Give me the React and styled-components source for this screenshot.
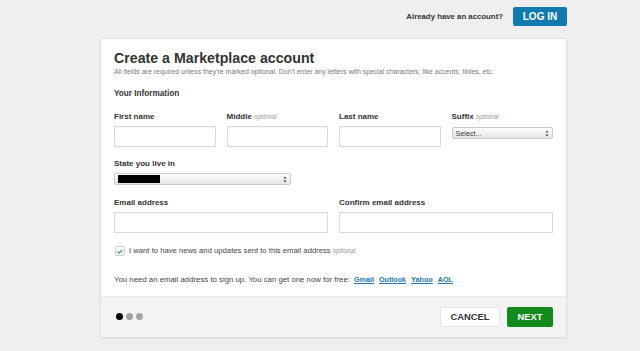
import React from "react";
import styled, { createGlobalStyle } from "styled-components";

const Global = createGlobalStyle`
  html, body { margin: 0; padding: 0; background: #efefef; }
  body { font-family: "Liberation Sans", Arial, sans-serif; color: #333; }
  * { box-sizing: border-box; }
`;

const Page = styled.div`
  width: 640px;
  height: 351px;
  overflow: hidden;
  background: #efefef;
`;

const TopBar = styled.div`
  height: 38px;
  display: flex;
  align-items: flex-start;
  justify-content: flex-end;
  padding: 7px 73px 0 0;
  gap: 10px;
`;

const Already = styled.span`
  font-size: 7.8px;
  font-weight: bold;
  color: #333;
  line-height: 19px;
`;

const LoginButton = styled.button`
  width: 54px;
  height: 19px;
  border: none;
  border-radius: 2px;
  background: #117bb0;
  color: #fff;
  font-family: inherit;
  font-weight: bold;
  font-size: 10px;
  padding: 0;
  line-height: 19px;
`;

const Card = styled.div`
  margin-left: 100px;
  width: 467px;
  background: #fff;
  border: 1px solid #e2e2e2;
  box-shadow: 0 1px 2px rgba(0, 0, 0, 0.06);
`;

const Body = styled.div`
  padding: 11px 13px 11px;
`;

const Title = styled.h1`
  margin: 0;
  font-size: 14.2px;
  line-height: 16px;
  font-weight: bold;
  color: #333;
`;

const Sub = styled.p`
  margin: 2px 0 0;
  font-size: 6.95px;
  line-height: 8px;
  color: #777;
`;

const Section = styled.h2`
  margin: 12px 0 0;
  font-size: 8.2px;
  line-height: 11px;
  font-weight: bold;
  color: #333;
`;

const Grid = styled.div`
  display: grid;
  grid-template-columns: repeat(${(p) => p.$cols}, 1fr);
  column-gap: 11px;
  margin-top: ${(p) => p.$top}px;
  width: ${(p) => p.$width || 439}px;
`;

const Field = styled.div`
  display: flex;
  flex-direction: column;
  gap: 4px;
`;

const Label = styled.label`
  font-size: 8px;
  line-height: 10px;
  font-weight: bold;
  color: #333;
`;

const Optional = styled.em`
  font-weight: normal;
  font-size: 6.5px;
  color: #999;
  margin-left: 2px;
`;

const Input = styled.div`
  height: 21px;
  border: 1px solid #d9d9d9;
  background: #fff;
  box-shadow: inset 0 1px 1px rgba(0, 0, 0, 0.04);
`;

const Select = styled.div`
  height: 12px;
  margin-top: ${(p) => p.$shift || 0}px;
  border: 1px solid #cbcbcb;
  border-radius: 2px;
  background: linear-gradient(#fdfdfd, #e6e6e6);
  display: flex;
  align-items: center;
  justify-content: space-between;
  padding: 0 3px 0 3px;
  font-size: 7.2px;
  color: #333;
  width: ${(p) => (p.$width ? p.$width + "px" : "auto")};
`;

const Redacted = styled.span`
  width: 42px;
  height: 8px;
  background: #000;
`;

const Arrows = () => (
  <svg width="4" height="7" viewBox="0 0 4 7">
    <path d="M2 0.5 L3.6 2.6 H0.4 Z M2 6.5 L3.6 4.4 H0.4 Z" fill="#444" />
  </svg>
);

const CheckRow = styled.div`
  margin-top: 13px;
  display: flex;
  align-items: center;
  gap: 4px;
  font-size: 7.7px;
  color: #444;
  line-height: 10px;
`;

const CheckBox = styled.span`
  width: 10px;
  height: 10px;
  margin-left: 1px;
  border: 1px solid #cfcfcf;
  border-radius: 2px;
  background: linear-gradient(#fff, #eee);
  display: flex;
  align-items: center;
  justify-content: center;
`;

const Providers = styled.p`
  margin: 19px 0 0;
  font-size: 7.8px;
  line-height: 10px;
  color: #444;
  display: flex;
  align-items: center;
`;

const ProviderLink = styled.a`
  font-weight: bold;
  color: #2477a8;
  text-decoration: underline;
  font-size: 7.2px;
  margin-left: ${(p) => (p.$first ? 4 : 5)}px;
`;

const Footer = styled.div`
  height: 41px;
  background: #f3f3f3;
  border-top: 1px solid #e6e6e6;
  display: flex;
  align-items: center;
  justify-content: space-between;
  padding: 0 13px 1px 15px;
`;

const Dots = styled.div`
  display: flex;
  gap: 3px;
`;

const Dot = styled.span`
  width: 7px;
  height: 7px;
  border-radius: 50%;
  background: ${(p) => (p.$active ? "#000" : "#a3a3a3")};
`;

const Actions = styled.div`
  display: flex;
  gap: 7px;
`;

const FooterButton = styled.button`
  height: 20px;
  width: ${(p) => p.$w}px;
  padding: 0;
  border: ${(p) => (p.$primary ? "none" : "1px solid #e4e4e4")};
  border-radius: 2px;
  background: ${(p) => (p.$primary ? "#128a1c" : "#fff")};
  color: ${(p) => (p.$primary ? "#fff" : "#333")};
  font-family: inherit;
  font-weight: bold;
  font-size: 9.4px;
`;

export default function App() {
  return (
    <>
      <Global />
      <Page>
        <TopBar>
          <Already>Already have an account?</Already>
          <LoginButton>LOG IN</LoginButton>
        </TopBar>
        <Card>
          <Body>
            <Title>Create a Marketplace account</Title>
            <Sub>
              All fields are required unless they're marked optional. Don't enter any letters
              with special characters, like accents, tildes, etc.
            </Sub>
            <Section>Your Information</Section>
            <Grid $cols={4} $top={13}>
              <Field>
                <Label>First name</Label>
                <Input />
              </Field>
              <Field>
                <Label>
                  Middle<Optional>optional</Optional>
                </Label>
                <Input />
              </Field>
              <Field>
                <Label>Last name</Label>
                <Input />
              </Field>
              <Field>
                <Label>
                  Suffix<Optional>optional</Optional>
                </Label>
                <Select $shift={1}>
                  <span>Select...</span>
                  <Arrows />
                </Select>
              </Field>
            </Grid>
            <Grid $cols={1} $top={12}>
              <Field>
                <Label>State you live in</Label>
                <Select $width={177}>
                  <Redacted />
                  <Arrows />
                </Select>
              </Field>
            </Grid>
            <Grid $cols={2} $top={13}>
              <Field>
                <Label>Email address</Label>
                <Input />
              </Field>
              <Field>
                <Label>Confirm email address</Label>
                <Input />
              </Field>
            </Grid>
            <CheckRow>
              <CheckBox>
                <svg width="6" height="5" viewBox="0 0 6 5">
                  <path d="M0.7 2.5 L2.3 4 L5.3 0.9" fill="none" stroke="#3c9a44" strokeWidth="1.2" />
                </svg>
              </CheckBox>
              <span>
                I want to have news and updates sent to this email address
                <Optional>optional</Optional>
              </span>
            </CheckRow>
            <Providers>
              You need an email address to sign up. You can get one now for free:
              <ProviderLink $first href="#">Gmail</ProviderLink>
              <ProviderLink href="#">Outlook</ProviderLink>
              <ProviderLink href="#">Yahoo</ProviderLink>
              <ProviderLink href="#">AOL</ProviderLink>
            </Providers>
          </Body>
          <Footer>
            <Dots>
              <Dot $active />
              <Dot />
              <Dot />
            </Dots>
            <Actions>
              <FooterButton $w={60}>CANCEL</FooterButton>
              <FooterButton $primary $w={46}>NEXT</FooterButton>
            </Actions>
          </Footer>
        </Card>
      </Page>
    </>
  );
}
